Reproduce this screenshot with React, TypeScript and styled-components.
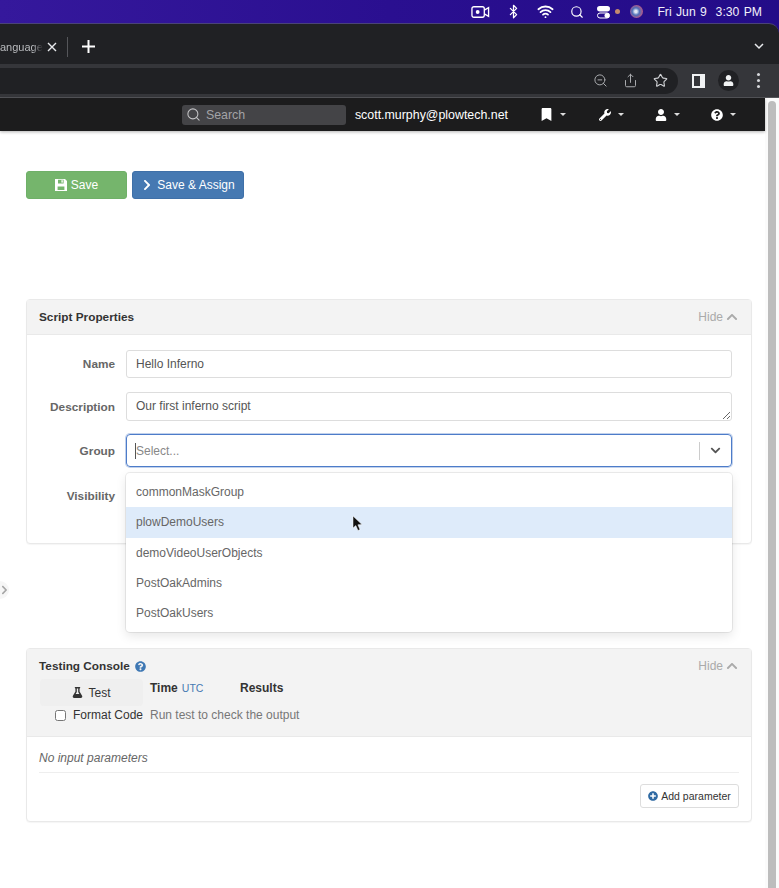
import { createGlobalStyle, styled } from 'styled-components'
import { Bluetooth, Search, Share, Star, Wifi, ZoomOut } from 'lucide-react'
import {
  FaBookmark,
  FaChevronDown,
  FaChevronRight,
  FaChevronUp,
  FaFlask,
  FaPlusCircle,
  FaQuestionCircle,
  FaUser,
  FaWrench,
} from 'react-icons/fa'

const GlobalStyle = createGlobalStyle`
  html, body {
    margin: 0;
    height: 100%;
    overflow: hidden;
    background: #fff;
  }
  body {
    font-family: "Liberation Sans", Arial, sans-serif;
    font-size: 12px;
    color: #333;
  }
`

const Page = styled.div`
  height: 888px;
  display: flex;
  flex-direction: column;
  background: linear-gradient(90deg, #35189c, #2a0f90 50%, #230c88);
`

const MenuBar = styled.div`
  height: 23px;
  flex: none;
  display: flex;
  align-items: center;
  justify-content: flex-end;
  padding-right: 17px;
  color: #f1effa;
  font-size: 12.2px;
`

const MenuIcons = styled.div`
  display: flex;
  align-items: center;
  gap: 16px;
  margin-right: 14px;
`

const Clock = styled.span`
  word-spacing: 1px;
`

const ControlCenter = styled.svg`
  margin-left: -4px;
`

const RecordDot = styled.span`
  width: 5px;
  height: 5px;
  margin-left: -13px;
  border-radius: 50%;
  background: #c58a6e;
`

const Siri = styled.span`
  width: 13px;
  height: 13px;
  margin-left: -6px;
  border-radius: 50%;
  background: radial-gradient(circle at 45% 50%, #dfe6f4 0 12%, #4c6fb8 38%, #b35a8a 70%, #4aa7a0);
`

const BrowserFrame = styled.div`
  flex: 1;
  min-height: 0;
  display: flex;
  flex-direction: column;
  border-top: 1px solid #4a4378;
  border-top-right-radius: 10px;
  background: #202124;
  overflow: hidden;
`

const TabStrip = styled.div`
  height: 39px;
  flex: none;
  display: flex;
  align-items: center;
  color: #e8eaed;
  padding-top: 6px;
  box-sizing: border-box;
`

const TabTitle = styled.span`
  width: 43px;
  color: #b9bbbe;
  font-size: 11px;
  white-space: nowrap;
  -webkit-mask-image: linear-gradient(90deg, #000 76%, transparent);
`

const TabClose = styled.span`
  display: flex;
  width: 18px;
  justify-content: center;
`

const TabDivider = styled.span`
  width: 1px;
  height: 20px;
  background: #55565a;
  margin: 0 14px 0 6px;
`

const NewTab = styled.span`
  display: flex;
  flex: 1;
`

const TabMenu = styled.span`
  display: flex;
  margin-right: 15px;
`

const Toolbar = styled.div`
  height: 34px;
  flex: none;
  display: flex;
  align-items: center;
  background: #35363a;
  border-bottom: 1px solid #55565a;
  box-sizing: border-box;
  margin-top: 1px;
`

const Omnibox = styled.div`
  width: 678px;
  height: 26px;
  display: flex;
  align-items: center;
  justify-content: flex-end;
  gap: 15px;
  padding-right: 10px;
  box-sizing: border-box;
  background: #202124;
  border-radius: 0 13px 13px 0;
  color: #a9abae;
`

const ToolbarActions = styled.div`
  flex: 1;
  display: flex;
  align-items: center;
  padding-left: 14px;
`

const SidePanelIcon = styled.span`
  width: 13px;
  height: 14px;
  box-sizing: border-box;
  border: 2px solid #f1f3f4;
  border-right-width: 5px;
  margin-right: 13px;
`

const Avatar = styled.span`
  width: 21px;
  height: 21px;
  border-radius: 50%;
  background: #202124;
  color: #f1f3f4;
  display: flex;
  align-items: center;
  justify-content: center;
  margin-right: 18px;
`

const MoreDots = styled.span`
  display: flex;
  flex-direction: column;
  gap: 3px;
  i {
    width: 3px;
    height: 3px;
    border-radius: 50%;
    background: #d7d9dc;
  }
`

const Viewport = styled.div`
  flex: 1;
  min-height: 0;
  display: flex;
  background: #fff;
`

const AppColumn = styled.div`
  width: 765px;
  flex: none;
  position: relative;
`

const Nav = styled.nav`
  height: 33px;
  display: flex;
  align-items: center;
  justify-content: flex-end;
  padding-right: 29px;
  background: #1c1c1d;
  box-shadow: 0 1px 3px rgba(0, 0, 0, 0.3);
  color: #fff;
`

const SearchBox = styled.div`
  width: 164px;
  height: 20px;
  display: flex;
  align-items: center;
  gap: 5px;
  padding-left: 4px;
  box-sizing: border-box;
  border-radius: 3px;
  background: #444447;
  color: #a3a3a6;
  font-size: 12.4px;
  margin-right: 9px;
`

const UserEmail = styled.span`
  margin-right: 32px;
  font-size: 12.4px;
  white-space: nowrap;
`

const NavMenu = styled.span<{ $gap: number }>`
  display: flex;
  align-items: center;
  gap: 7px;
  margin-right: ${(p) => p.$gap}px;
  &::after {
    content: '';
    border-top: 3.5px solid #ddd;
    border-left: 3px solid transparent;
    border-right: 3px solid transparent;
  }
`

const Main = styled.main`
  padding: 40px 13px 0 26px;
`

const ButtonRow = styled.div`
  display: flex;
  gap: 5px;
  margin-bottom: 100px;
`

const ActionButton = styled.button<{ $tone: 'green' | 'blue'; $width: number }>`
  width: ${(p) => p.$width}px;
  height: 28px;
  padding: 0;
  display: flex;
  align-items: center;
  justify-content: center;
  gap: 4px;
  border: 1px solid ${(p) => (p.$tone === 'green' ? '#6fb068' : '#3f70a8')};
  border-radius: 3px;
  background: ${(p) => (p.$tone === 'green' ? '#75b56c' : '#4679b2')};
  color: #fff;
  font: inherit;
`

const Panel = styled.section`
  border: 1px solid #e9e9e9;
  border-radius: 4px;
  background: #fff;
  box-shadow: 0 1px 1px rgba(0, 0, 0, 0.04);
`

const PanelHeader = styled.header`
  height: 34px;
  display: flex;
  align-items: center;
  justify-content: space-between;
  padding: 0 13px 0 12px;
  background: #f3f3f3;
  border-bottom: 1px solid #e9e9e9;
`

const PanelTitle = styled.h3`
  margin: 0;
  display: flex;
  align-items: center;
  gap: 5px;
  font-size: 11.8px;
  font-weight: bold;
  color: #333;
`

const HideToggle = styled.span`
  display: flex;
  align-items: center;
  gap: 3px;
  color: #aaa;
`

const PropertiesBody = styled.div`
  height: 208px;
  box-sizing: border-box;
  padding: 15px 19px 0 0;
  display: flex;
  flex-direction: column;
`

const FormRow = styled.div<{ $mb: number }>`
  display: flex;
  align-items: center;
  margin-bottom: ${(p) => p.$mb}px;
  position: relative;
`

const FieldLabel = styled.label`
  width: 88px;
  margin-right: 11px;
  flex: none;
  text-align: right;
  font-size: 11.8px;
  font-weight: bold;
  color: #666;
`

const TextInput = styled.input`
  flex: 1;
  min-width: 0;
  height: 28px;
  padding: 0 9px;
  box-sizing: border-box;
  border: 1px solid #ddd;
  border-radius: 3px;
  background: #fff;
  color: #555;
  font: inherit;
  outline: none;
`

const TextArea = styled.textarea`
  flex: 1;
  min-width: 0;
  height: 29px;
  padding: 6px 9px 4px;
  box-sizing: border-box;
  border: 1px solid #ddd;
  border-radius: 3px;
  color: #555;
  font: inherit;
  outline: none;
  display: block;
`

const SelectControl = styled.div`
  flex: 1;
  height: 33px;
  display: flex;
  align-items: center;
  box-sizing: border-box;
  border: 1px solid #4d7cc9;
  border-radius: 4px;
  box-shadow: 0 0 0 1px rgba(77, 124, 201, 0.35);
  padding-left: 8px;
  color: #888;
`

const Placeholder = styled.span`
  flex: 1;
  border-left: 1px solid #555;
  line-height: 16px;
`

const SelectDivider = styled.span`
  width: 1px;
  height: 18px;
  background: #ccc;
`

const SelectArrow = styled.span`
  width: 31px;
  display: flex;
  justify-content: center;
  color: #555;
`

const Menu = styled.div`
  position: absolute;
  z-index: 2;
  top: 39px;
  left: 99px;
  right: 0;
  padding: 4px 0;
  background: #fff;
  border-radius: 4px;
  box-shadow: 0 0 0 1px rgba(0, 0, 0, 0.07), 0 4px 11px rgba(0, 0, 0, 0.1);
`

const MenuOption = styled.div<{ $active?: boolean }>`
  height: 30.3px;
  position: relative;
  display: flex;
  align-items: center;
  padding-left: 10px;
  color: #666;
  background: ${(p) => (p.$active ? '#deebfa' : 'transparent')};
`

const Pointer = styled.svg`
  position: absolute;
  left: 226px;
  top: 9px;
`

const ConsolePanel = styled(Panel)`
  margin-top: 104px;
`

const ConsoleHeader = styled.header`
  height: 88px;
  padding: 10px 13px 0 12px;
  box-sizing: border-box;
  background: #f3f3f3;
  border-bottom: 1px solid #e9e9e9;
`

const ConsoleTitleRow = styled.div`
  display: flex;
  justify-content: space-between;
  align-items: center;
  margin-bottom: 6px;
`

const ConsoleGrid = styled.div`
  display: grid;
  grid-template-columns: 103px 1fr;
  column-gap: 7px;
  margin-left: 1px;
`

const TestTab = styled.div`
  height: 27px;
  display: flex;
  align-items: center;
  justify-content: center;
  gap: 5px;
  box-sizing: border-box;
  border-radius: 4px;
  background: #efefef;
  color: #333;
`

const ResultColumns = styled.div`
  display: flex;
  align-items: flex-start;
  padding-top: 2px;
  font-weight: bold;
`

const TimeColumn = styled.span`
  width: 90px;
  flex: none;
`

const UtcTag = styled.span`
  font-weight: normal;
  font-size: 10.5px;
  color: #4679b2;
  margin-left: 4px;
`

const FormatCode = styled.label`
  height: 18px;
  display: flex;
  align-items: center;
  justify-content: flex-end;
  gap: 7px;
  white-space: nowrap;
  color: #333;
`

const CheckBox = styled.input`
  width: 11px;
  height: 11px;
  margin: 0;
`

const ResultHint = styled.span`
  line-height: 18px;
  color: #777;
`

const ParamsBody = styled.div`
  height: 84px;
  padding: 14px 12px 0;
  box-sizing: border-box;
`

const EmptyParams = styled.div`
  padding-bottom: 7px;
  font-style: italic;
  color: #666;
  border-bottom: 1px solid #eee;
`

const ParamActions = styled.div`
  display: flex;
  justify-content: flex-end;
  padding-top: 11px;
`

const AddButton = styled.button`
  height: 24px;
  width: 99px;
  padding: 0;
  display: flex;
  align-items: center;
  justify-content: center;
  gap: 3px;
  background: #fff;
  border: 1px solid #ddd;
  border-radius: 3px;
  color: #333;
  font: inherit;
  font-size: 10.5px;
`

const SideHandle = styled.div`
  position: absolute;
  left: 0;
  top: 483px;
  width: 9px;
  height: 18px;
  display: flex;
  align-items: center;
  color: #a5a5a5;
  background: #f6f6f6;
  border-radius: 0 9px 9px 0;
`

const ScrollTrack = styled.div`
  flex: 1;
  display: flex;
  justify-content: center;
  padding-top: 3px;
  background: #fbfbfb;
`

const ScrollThumb = styled.div`
  width: 8px;
  height: 100%;
  border-radius: 4px 4px 0 0;
  background: #bdbdbd;
`

const groups = ['commonMaskGroup', 'plowDemoUsers', 'demoVideoUserObjects', 'PostOakAdmins', 'PostOakUsers']

const App = () => (
  <>
    <GlobalStyle />
    <Page>
      <MenuBar>
        <MenuIcons>
          <svg width="19" height="14" viewBox="0 0 20 14" fill="none" stroke="#fff" strokeWidth="1.4">
            <rect x="1" y="1.5" width="13" height="11" rx="2" />
            <path d="M14 5 L18.5 2.5 V11.5 L14 9" />
            <circle cx="7" cy="7" r="2" fill="#fff" stroke="none" />
          </svg>
          <Bluetooth size={15} color="#fff" />
          <Wifi size={17} color="#fff" strokeWidth={2.6} />
          <Search size={14} color="#fff" strokeWidth={2} />
          <ControlCenter width="16" height="14" viewBox="0 0 16 14">
            <rect x="1" y="1" width="13" height="5.5" rx="2.75" fill="#fff" />
            <rect x="1.5" y="8" width="12" height="5" rx="2.5" fill="none" stroke="#fff" />
            <circle cx="11" cy="10.5" r="2.5" fill="#fff" />
          </ControlCenter>
          <RecordDot />
          <Siri />
        </MenuIcons>
        <Clock>Fri Jun 9 &nbsp;3:30 PM</Clock>
      </MenuBar>
      <BrowserFrame>
        <TabStrip>
          <TabTitle>anguage</TabTitle>
          <TabClose>
            <svg width="10" height="10" viewBox="0 0 10 10" stroke="#e8eaed" strokeWidth="1.4">
              <path d="M1 1 L9 9 M9 1 L1 9" />
            </svg>
          </TabClose>
          <TabDivider />
          <NewTab>
            <svg width="13" height="13" viewBox="0 0 13 13" stroke="#fff" strokeWidth="2">
              <path d="M6.5 0 V13 M0 6.5 H13" />
            </svg>
          </NewTab>
          <TabMenu>
            <svg width="10" height="7" viewBox="0 0 10 7" fill="none" stroke="#e8eaed" strokeWidth="1.5">
              <path d="M1 1 L5 5 L9 1" />
            </svg>
          </TabMenu>
        </TabStrip>
        <Toolbar>
          <Omnibox>
            <ZoomOut size={15} strokeWidth={1.6} />
            <Share size={15} strokeWidth={1.6} />
            <Star size={15} strokeWidth={1.8} color="#d0d2d5" />
          </Omnibox>
          <ToolbarActions>
            <SidePanelIcon />
            <Avatar>
              <FaUser size={11} />
            </Avatar>
            <MoreDots>
              <i />
              <i />
              <i />
            </MoreDots>
          </ToolbarActions>
        </Toolbar>
        <Viewport>
          <AppColumn>
            <Nav>
              <SearchBox>
                <Search size={15} color="#c4c4c6" strokeWidth={1.7} />
                Search
              </SearchBox>
              <UserEmail>scott.murphy@plowtech.net</UserEmail>
              <NavMenu $gap={33}>
                <FaBookmark size={13} />
              </NavMenu>
              <NavMenu $gap={31}>
                <FaWrench size={12} />
              </NavMenu>
              <NavMenu $gap={31}>
                <FaUser size={12} />
              </NavMenu>
              <NavMenu $gap={0}>
                <FaQuestionCircle size={12} />
              </NavMenu>
            </Nav>
            <Main>
              <ButtonRow>
                <ActionButton $tone="green" $width={101}>
                  <svg width="12" height="12" viewBox="0 0 12 12" fill="#fff" fillRule="evenodd">
                    <path d="M0 0 H10 L12 2 V12 H0 Z M3 0.8 V4.4 H8.6 V0.8 Z M2.6 7.4 V11 H9.4 V7.4 Z" />
                    <rect x="6.4" y="1.2" width="1.4" height="2.4" />
                  </svg>
                  Save
                </ActionButton>
                <ActionButton $tone="blue" $width={112}>
                  <FaChevronRight size={12} />
                  Save &amp; Assign
                </ActionButton>
              </ButtonRow>
              <Panel>
                <PanelHeader>
                  <PanelTitle>Script Properties</PanelTitle>
                  <HideToggle>
                    Hide <FaChevronUp size={12} />
                  </HideToggle>
                </PanelHeader>
                <PropertiesBody>
                  <FormRow $mb={14}>
                    <FieldLabel>Name</FieldLabel>
                    <TextInput readOnly value="Hello Inferno" />
                  </FormRow>
                  <FormRow $mb={13}>
                    <FieldLabel>Description</FieldLabel>
                    <TextArea readOnly value="Our first inferno script" />
                  </FormRow>
                  <FormRow $mb={22}>
                    <FieldLabel>Group</FieldLabel>
                    <SelectControl>
                      <Placeholder>Select...</Placeholder>
                      <SelectDivider />
                      <SelectArrow>
                        <FaChevronDown size={11} />
                      </SelectArrow>
                    </SelectControl>
                    <Menu>
                      {groups.map((group, i) => (
                        <MenuOption key={group} $active={i === 1}>
                          {group}
                          {i === 1 && (
                            <Pointer width="11" height="16" viewBox="0 0 11 16">
                              <path d="M1 0 L1 12 L3.8 9.6 L6 14.5 L8 13.6 L5.9 8.8 L10 8.6 Z" fill="#111" stroke="#fff" strokeWidth="0.5" />
                            </Pointer>
                          )}
                        </MenuOption>
                      ))}
                    </Menu>
                  </FormRow>
                  <FormRow $mb={0}>
                    <FieldLabel>Visibility</FieldLabel>
                  </FormRow>
                </PropertiesBody>
              </Panel>
              <ConsolePanel>
                <ConsoleHeader>
                  <ConsoleTitleRow>
                    <PanelTitle>
                      Testing Console
                      <FaQuestionCircle size={11} color="#3f78b4" />
                    </PanelTitle>
                    <HideToggle>
                      Hide <FaChevronUp size={12} />
                    </HideToggle>
                  </ConsoleTitleRow>
                  <ConsoleGrid>
                    <TestTab>
                      <FaFlask size={11} />
                      Test
                    </TestTab>
                    <ResultColumns>
                      <TimeColumn>
                        Time
                        <UtcTag>UTC</UtcTag>
                      </TimeColumn>
                      <span>Results</span>
                    </ResultColumns>
                    <FormatCode>
                      <CheckBox type="checkbox" readOnly />
                      Format Code
                    </FormatCode>
                    <ResultHint>Run test to check the output</ResultHint>
                  </ConsoleGrid>
                </ConsoleHeader>
                <ParamsBody>
                  <EmptyParams>No input parameters</EmptyParams>
                  <ParamActions>
                    <AddButton>
                      <FaPlusCircle size={10} color="#2f6aa3" />
                      Add parameter
                    </AddButton>
                  </ParamActions>
                </ParamsBody>
              </ConsolePanel>
            </Main>
            <SideHandle>
              <FaChevronRight size={10} />
            </SideHandle>
          </AppColumn>
          <ScrollTrack>
            <ScrollThumb />
          </ScrollTrack>
        </Viewport>
      </BrowserFrame>
    </Page>
  </>
)

export default App
